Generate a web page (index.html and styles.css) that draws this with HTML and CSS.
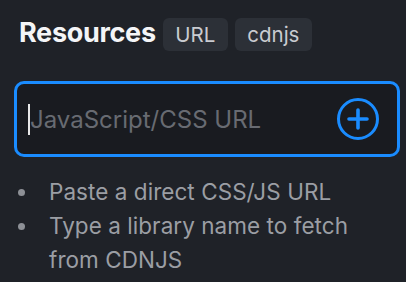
FILE: index.html
```html
<!DOCTYPE html>
<html lang="en">
<head>
    <meta charset="UTF-8">
    <meta name="viewport" content="width=device-width, initial-scale=1.0">
    <title>Resources</title>
    <link rel="stylesheet" href="styles.css">
</head>
<body>

    <div class="panel">
        <div class="header">
            <span class="title">Resources</span>
            <span class="badge">URL</span>
            <span class="badge">cdnjs</span>
        </div>

        <div class="url-box">
            <span class="caret"></span>
            <span class="placeholder">JavaScript/CSS URL</span>
            <svg class="add-icon" width="44" height="44" viewBox="0 0 44 44">
                <circle cx="22" cy="22" r="19.5" fill="none" stroke="#1a8cff" stroke-width="3"/>
                <path d="M22 13v18M13 22h18" stroke="#1a8cff" stroke-width="3.6" stroke-linecap="round"/>
            </svg>
        </div>

        <ul class="hints">
            <li>Paste a direct CSS/JS URL</li>
            <li>Type a library name to fetch from CDNJS</li>
        </ul>
    </div>

</body>
</html>
```

FILE: styles.css
```css
* { margin: 0; padding: 0; box-sizing: border-box; font-family: Inter, "Noto Sans", sans-serif; }
body { background: #1f2228; color: white; }
.panel { padding: 16px 6px 0 14px; }
.header { display: flex; align-items: baseline; gap: 7px; padding-left: 5px; height: 33px; }
.title { font-size: 27px; font-weight: bold; color: #f4f5f7; letter-spacing: -0.3px; }
.badge {
    background: #2c3037; color: #c9cbd0; font-size: 20.5px; line-height: 33px;
    padding: 0 12.5px; border-radius: 6px;
}
.url-box {
    margin-top: 32px; height: 76px; border: 3px solid #1a8cff; border-radius: 10px;
    background: #191b20; display: flex; align-items: center; padding: 0 17px 0 11px;
}
.caret { width: 2px; height: 31px; background: #e8e8e8; }
.placeholder { flex: 1; font-size: 24px; color: #686b72; }
.add-icon { display: block; }
.hints { list-style: none; margin-top: 18px; padding-right: 12px; }
.hints li {
    position: relative; padding-left: 35px; font-size: 22.5px; line-height: 34px;
    color: #9b9ea4; letter-spacing: 0.05px;
}
.hints li::before {
    content: ""; position: absolute; left: 4px; top: 14px; width: 7px; height: 7px;
    border-radius: 50%; background: #8d9096;
}
```
